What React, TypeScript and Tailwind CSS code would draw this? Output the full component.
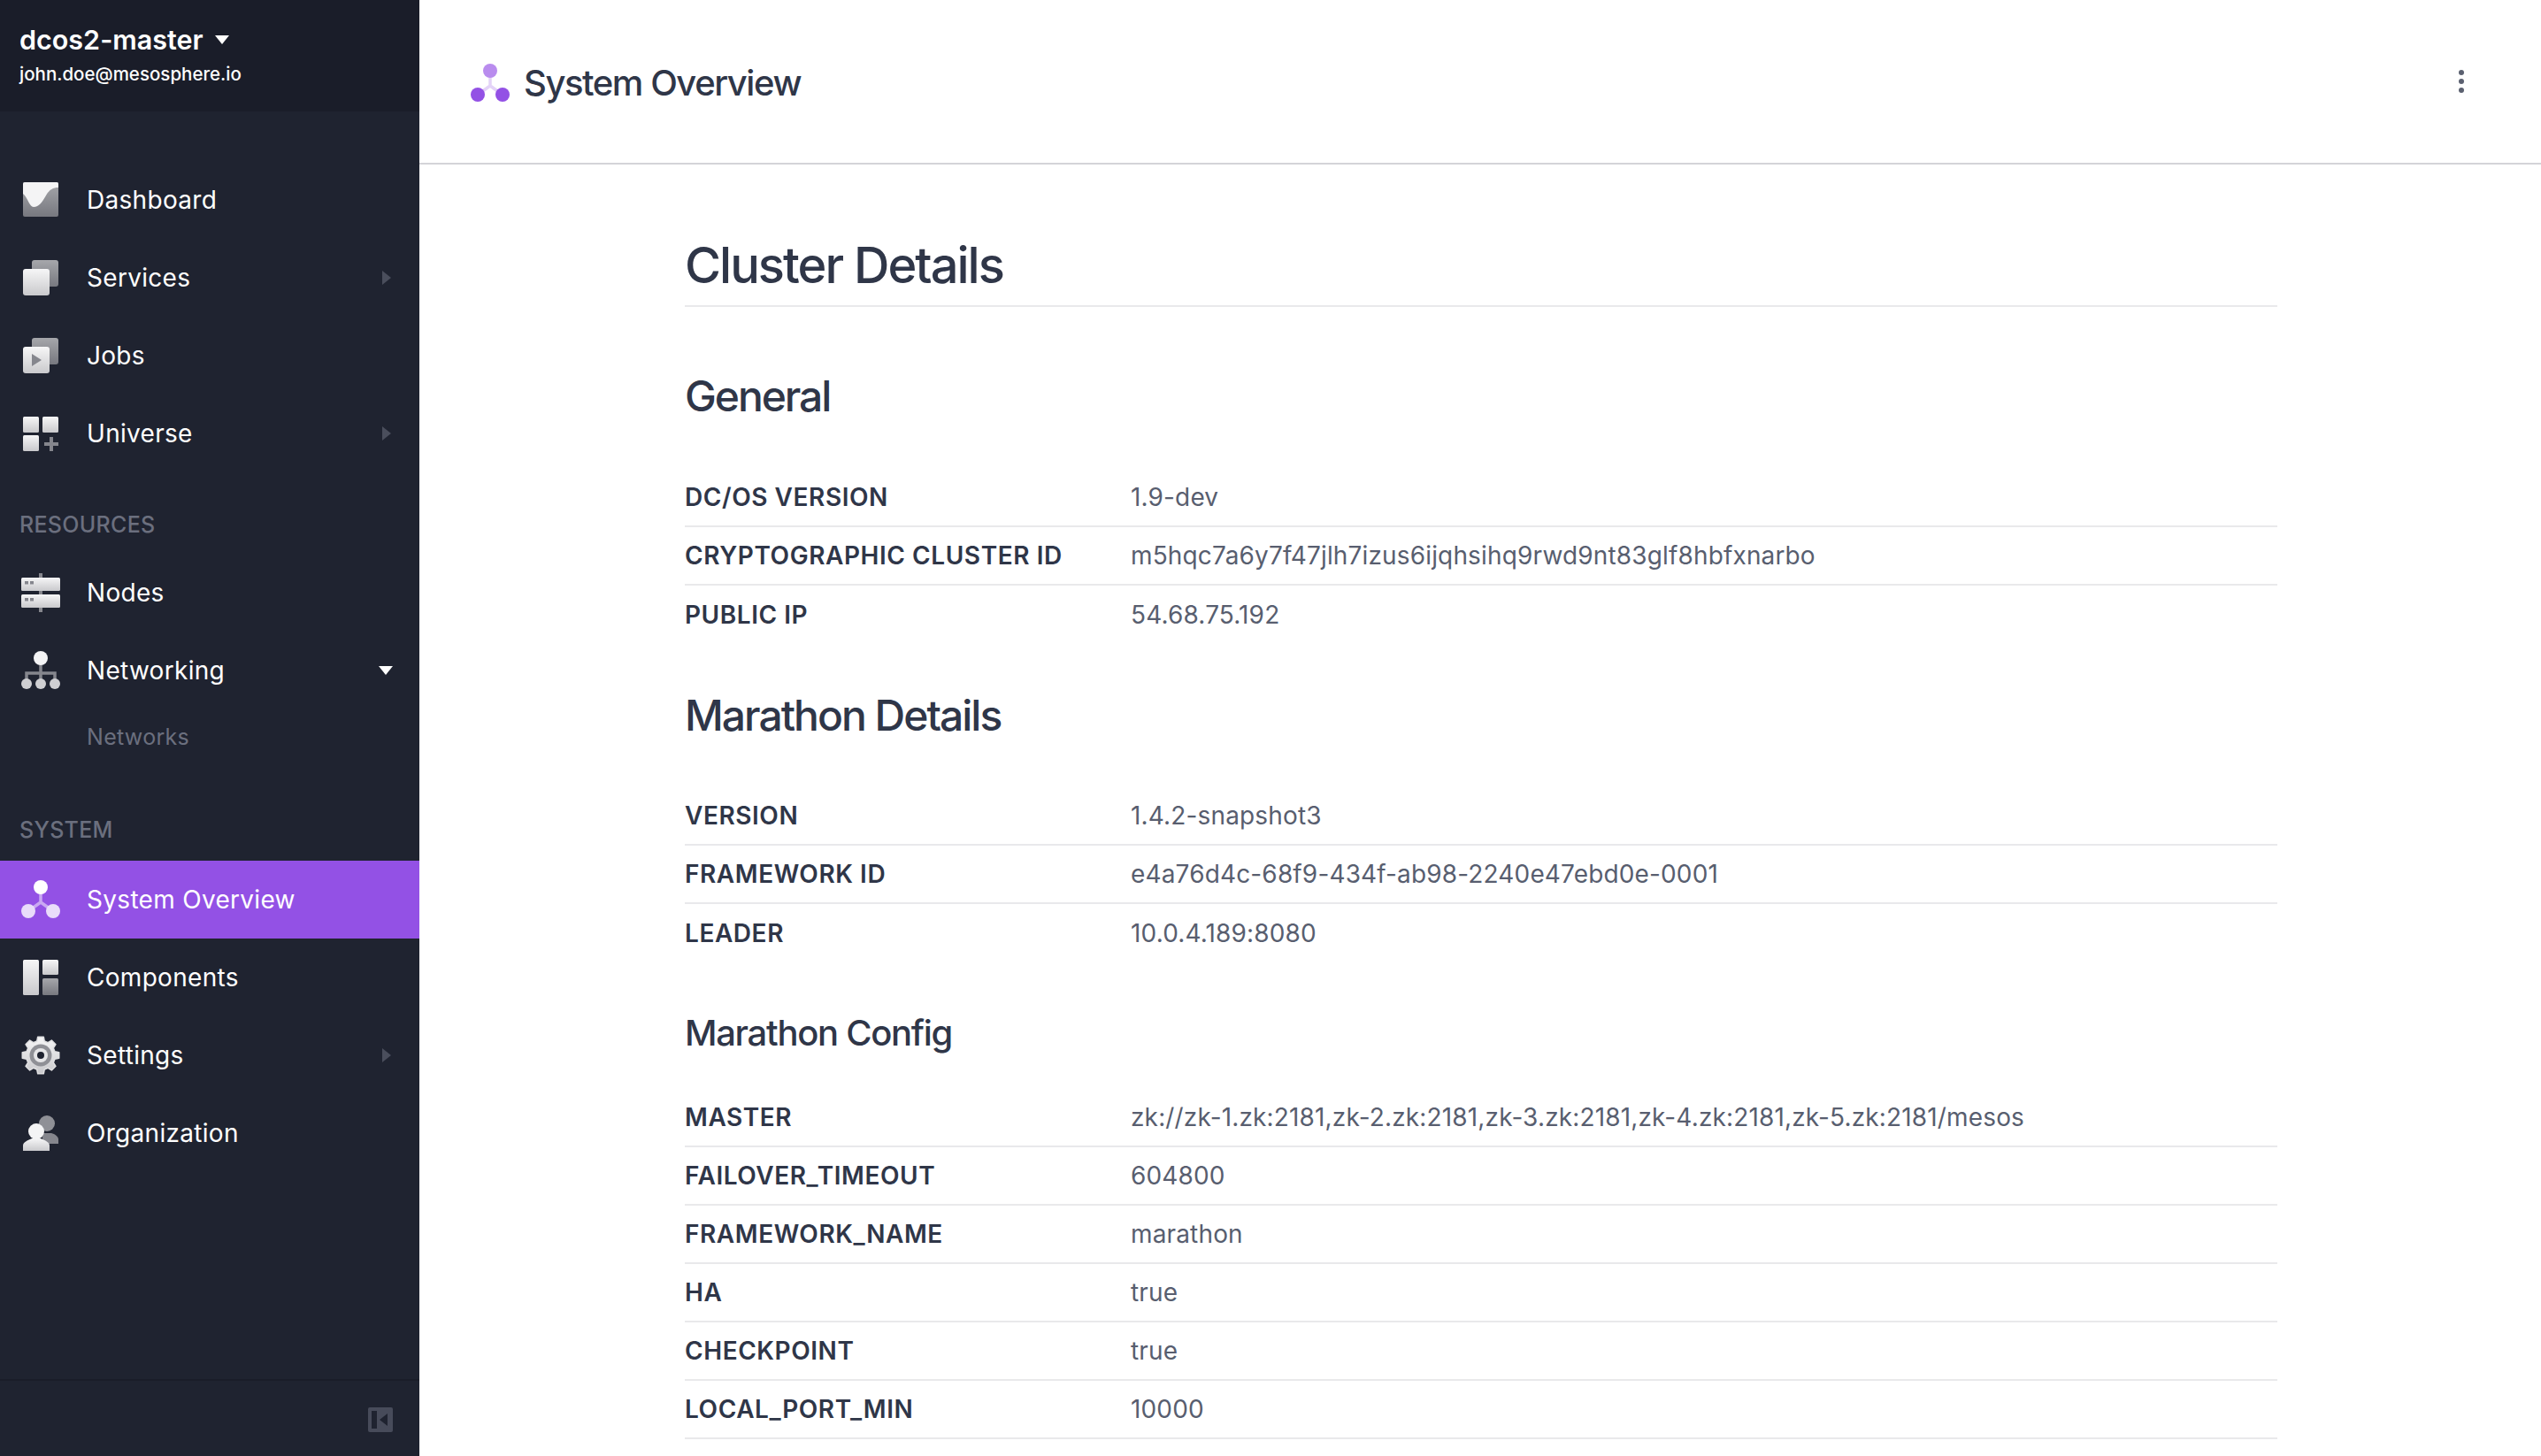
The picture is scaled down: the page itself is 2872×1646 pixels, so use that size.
const gearPath = (() => {
  const pts: string[] = []
  for (let i = 0; i < 8; i++) {
    const a = i * 45 - 90
    for (const [d, r] of [[-15, 16.5], [-9, 21], [9, 21], [15, 16.5]]) {
      const t = ((a + d) * Math.PI) / 180
      pts.push(`${(22 + r * Math.cos(t)).toFixed(2)} ${(22 + r * Math.sin(t)).toFixed(2)}`)
    }
  }
  return 'M' + pts.join('L') + 'Z'
})()

const LIGHT = 'url(#navLight)'
const DARK = 'url(#navDark)'

function Svg({ children }: { children: React.ReactNode }) {
  return (
    <svg width="44" height="44" viewBox="0 0 44 44" className="shrink-0">
      {children}
    </svg>
  )
}

const DashboardIcon = () => (
  <Svg>
    <rect x="2" y="2" width="40" height="39" rx="2" fill={DARK} />
    <path d="M2 15C8 20 9 30 14 30C20 30 24 24 28 17C32 10 36 8 42 8V4a2 2 0 0 0-2-2H4a2 2 0 0 0-2 2Z" fill="#f4f4f5" />
  </Svg>
)

const ServicesIcon = () => (
  <Svg>
    <rect x="12" y="2" width="30" height="30" rx="3" fill={DARK} />
    <rect x="2" y="12" width="30" height="30" rx="3" fill={LIGHT} />
  </Svg>
)

const JobsIcon = () => (
  <Svg>
    <rect x="12" y="2" width="30" height="30" rx="3" fill={DARK} />
    <rect x="2" y="12" width="30" height="30" rx="3" fill={LIGHT} />
    <path d="M12 20L23 27L12 34Z" fill="#85868d" />
  </Svg>
)

const UniverseIcon = () => (
  <Svg>
    <rect x="2" y="3" width="18" height="18" rx="1.5" fill={LIGHT} />
    <rect x="24" y="3" width="18" height="18" rx="1.5" fill={LIGHT} />
    <rect x="2" y="24" width="18" height="18" rx="1.5" fill={LIGHT} />
    <path d="M32 26h4v6h6v4h-6v6h-4v-6h-6v-4h6Z" fill="#85868d" />
  </Svg>
)

const NodesIcon = () => (
  <Svg>
    <rect x="20" y="0" width="4" height="44" fill="#85868d" />
    <rect x="0" y="5" width="44" height="15" rx="1.5" fill={LIGHT} />
    <rect x="0" y="24" width="44" height="15" rx="1.5" fill={LIGHT} />
    <rect x="4" y="9" width="4" height="3.5" fill="#85868d" />
    <rect x="10" y="9" width="4" height="3.5" fill="#85868d" />
    <rect x="4" y="28" width="4" height="3.5" fill="#85868d" />
    <rect x="10" y="28" width="4" height="3.5" fill="#85868d" />
  </Svg>
)

const NetworkingIcon = () => (
  <Svg>
    <path d="M22 10V36M6 36V25H38V36" fill="none" stroke="#85868d" strokeWidth="3.5" />
    <circle cx="22" cy="8" r="8" fill="#f4f4f5" />
    <circle cx="6" cy="37" r="6" fill="#cfcfd2" />
    <circle cx="22" cy="37" r="6" fill="#cfcfd2" />
    <circle cx="38" cy="37" r="6" fill="#cfcfd2" />
  </Svg>
)

const OverviewIcon = ({ top, bottom, line }: { top: string; bottom: string; line: string }) => (
  <svg width="44" height="44" viewBox="0 0 44 44" className="shrink-0">
    <path d="M22 10V25M8 35L22 25L36 35" fill="none" stroke={line} strokeWidth="3.5" />
    <circle cx="22" cy="8" r="8" fill={top} />
    <circle cx="8" cy="35" r="8" fill={bottom} />
    <circle cx="36" cy="35" r="8" fill={bottom} />
  </svg>
)

const ComponentsIcon = () => (
  <Svg>
    <rect x="2" y="2" width="18" height="40" rx="1.5" fill={LIGHT} />
    <rect x="24" y="2" width="18" height="17" rx="1.5" fill={LIGHT} />
    <rect x="24" y="23" width="18" height="19" rx="1.5" fill={DARK} />
  </Svg>
)

const SettingsIcon = () => (
  <Svg>
    <path d={gearPath} fill={LIGHT} stroke="#e0e0e2" strokeWidth="1.5" strokeLinejoin="round" />
    <circle cx="22" cy="22" r="12.5" fill="#8f9096" />
    <circle cx="22" cy="22" r="8" fill="#e6e6e8" />
    <circle cx="22" cy="22" r="4" fill="#1f2330" />
  </Svg>
)

const OrganizationIcon = () => (
  <Svg>
    <circle cx="29" cy="11" r="9" fill="#8f9096" />
    <path d="M24 22H34C38 23 42 26 42 29V34H24Z" fill="#85868d" />
    <path d="M2 42V36C2 32 8 30 12 28H22C26 30 32 32 32 36V42Z" fill={LIGHT} />
    <circle cx="17" cy="20" r="9" fill="#f4f4f5" />
  </Svg>
)

type NavItem = { label: string; icon: React.ReactNode; arrow?: 'right' | 'down'; active?: boolean }

function NavRow({ item }: { item: NavItem }) {
  return (
    <div className={`flex h-[88px] items-center pl-6 pr-[30px] ${item.active ? 'bg-[#9351e5]' : ''}`}>
      {item.icon}
      <span className="ml-[30px] flex-1 text-[28px] leading-none tracking-[0.3px] text-white">{item.label}</span>
      {item.arrow === 'right' && (
        <svg width="10" height="16" viewBox="0 0 10 16" className="mr-[2px]">
          <path d="M0 0L10 8L0 16Z" fill="#4a4e5c" />
        </svg>
      )}
      {item.arrow === 'down' && (
        <svg width="16" height="10" viewBox="0 0 16 10">
          <path d="M0 0H16L8 10Z" fill="#ffffff" />
        </svg>
      )}
    </div>
  )
}

function SectionLabel({ children, className }: { children: React.ReactNode; className: string }) {
  return (
    <div className={`flex items-end pl-[22px] text-[25px] leading-[32px] font-medium tracking-[0.3px] text-[#6b6f7e] ${className}`}>
      {children}
    </div>
  )
}

function DetailRow({ label, value, last }: { label: string; value: string; last?: boolean }) {
  return (
    <div className={`flex h-[66px] items-center ${last ? '' : 'border-b-2 border-[#e9e9eb]'}`}>
      <div className="w-[504px] shrink-0 text-[28px] leading-none font-semibold tracking-[0.02em] text-[#2f3648]">{label}</div>
      <div className="text-[28px] leading-none tracking-[0.15px] text-[#585e6f]">{value}</div>
    </div>
  )
}

export default function App() {
  return (
    <div className="flex h-screen overflow-hidden bg-white font-[Inter,sans-serif]">
      {/* shared icon gradients */}
      <svg className="absolute h-0 w-0">
        <defs>
          <linearGradient id="navLight" x1="0" y1="0" x2="0" y2="1">
            <stop offset="0" stopColor="#f6f6f7" />
            <stop offset="1" stopColor="#c9c9cc" />
          </linearGradient>
          <linearGradient id="navDark" x1="0" y1="0" x2="0" y2="1">
            <stop offset="0" stopColor="#a6a7ab" />
            <stop offset="1" stopColor="#77787f" />
          </linearGradient>
        </defs>
      </svg>

      {/* Sidebar */}
      <aside className="flex w-[474px] shrink-0 flex-col bg-[#1f2330]">
        <div className="h-[126px] bg-[#1a1d29] pl-[22px] pt-[26px]">
          <div className="flex items-center text-[30.5px] leading-[38px] font-semibold text-white">
            dcos2-master
            <svg width="16" height="10" viewBox="0 0 16 10" className="ml-[13px]">
              <path d="M0 0H16L8 10Z" fill="#ffffff" />
            </svg>
          </div>
          <div className="mt-[6px] text-[20.5px] leading-[28px] font-medium text-white">john.doe@mesosphere.io</div>
        </div>

        <nav className="flex-1 pt-[56px]">
          <NavRow item={{ label: 'Dashboard', icon: <DashboardIcon /> }} />
          <NavRow item={{ label: 'Services', icon: <ServicesIcon />, arrow: 'right' }} />
          <NavRow item={{ label: 'Jobs', icon: <JobsIcon /> }} />
          <NavRow item={{ label: 'Universe', icon: <UniverseIcon />, arrow: 'right' }} />

          <SectionLabel className="h-[75px]">RESOURCES</SectionLabel>
          <div className="h-[17px]" />
          <NavRow item={{ label: 'Nodes', icon: <NodesIcon /> }} />
          <NavRow item={{ label: 'Networking', icon: <NetworkingIcon />, arrow: 'down' }} />
          <div className="h-[62px] pl-[98px] pt-[16px] text-[25px] leading-[30px] tracking-[0.3px] text-[#6b6f7e]">Networks</div>

          <SectionLabel className="h-[90px]">SYSTEM</SectionLabel>
          <div className="h-[19px]" />
          <NavRow
            item={{
              label: 'System Overview',
              active: true,
              icon: <OverviewIcon top="#ffffff" bottom="#e9dcfa" line="#c9a8f2" />,
            }}
          />
          <NavRow item={{ label: 'Components', icon: <ComponentsIcon /> }} />
          <NavRow item={{ label: 'Settings', icon: <SettingsIcon />, arrow: 'right' }} />
          <NavRow item={{ label: 'Organization', icon: <OrganizationIcon /> }} />
        </nav>

        <div className="flex h-[87px] items-center justify-end border-t-2 border-[#1a1d29] pr-[30px] pt-[3px]">
          <svg width="28" height="28" viewBox="0 0 28 28">
            <rect width="28" height="28" rx="2" fill="#474b5a" />
            <rect x="4" y="4" width="6" height="20" fill="#1f2330" />
            <path d="M22 7V21L13 14Z" fill="#1f2330" />
          </svg>
        </div>
      </aside>

      {/* Main */}
      <main className="min-w-0 flex-1">
        <header className="flex h-[186px] items-center justify-between border-b-2 border-[#d4d4d8] pl-[58px] pr-[87px]">
          <div className="mt-[3px] flex items-center">
            <OverviewIcon top="#b98cee" bottom="#9351e5" line="#e4d3f8" />
            <h1 className="ml-4 text-[40px] leading-none font-medium tracking-[-1.45px] text-[#2f3648]">System Overview</h1>
          </div>
          <div className="flex flex-col gap-1">
            <span className="h-[6px] w-[6px] rounded-full bg-[#5b6070]" />
            <span className="h-[6px] w-[6px] rounded-full bg-[#5b6070]" />
            <span className="h-[6px] w-[6px] rounded-full bg-[#5b6070]" />
          </div>
        </header>

        <div className="ml-[300px] w-[1800px] pt-[80px]">
          <h2 className="h-[81px] border-b-2 border-[#e9e9eb] text-[56px] leading-[68px] font-[450] tracking-[-2px] text-[#2f3648]">Cluster Details</h2>

          <h3 className="mt-[71px] text-[48px] leading-[60px] font-[450] tracking-[-2.1px] text-[#2f3648]">General</h3>
          <div className="mt-[52px]">
            <DetailRow label="DC/OS VERSION" value="1.9-dev" />
            <DetailRow label="CRYPTOGRAPHIC CLUSTER ID" value="m5hqc7a6y7f47jlh7izus6ijqhsihq9rwd9nt83glf8hbfxnarbo" />
            <DetailRow label="PUBLIC IP" value="54.68.75.192" last />
          </div>

          <h3 className="mt-[51px] text-[48px] leading-[60px] font-[450] tracking-[-2px] text-[#2f3648]">Marathon Details</h3>
          <div className="mt-[51px]">
            <DetailRow label="VERSION" value="1.4.2-snapshot3" />
            <DetailRow label="FRAMEWORK ID" value="e4a76d4c-68f9-434f-ab98-2240e47ebd0e-0001" />
            <DetailRow label="LEADER" value="10.0.4.189:8080" last />
          </div>

          <h3 className="mt-[52px] text-[40px] leading-[56px] font-[450] tracking-[-1.3px] text-[#2f3648]">Marathon Config</h3>
          <div className="mt-[35px]">
            <DetailRow label="MASTER" value="zk://zk-1.zk:2181,zk-2.zk:2181,zk-3.zk:2181,zk-4.zk:2181,zk-5.zk:2181/mesos" />
            <DetailRow label="FAILOVER_TIMEOUT" value="604800" />
            <DetailRow label="FRAMEWORK_NAME" value="marathon" />
            <DetailRow label="HA" value="true" />
            <DetailRow label="CHECKPOINT" value="true" />
            <DetailRow label="LOCAL_PORT_MIN" value="10000" />
          </div>
        </div>
      </main>
    </div>
  )
}
